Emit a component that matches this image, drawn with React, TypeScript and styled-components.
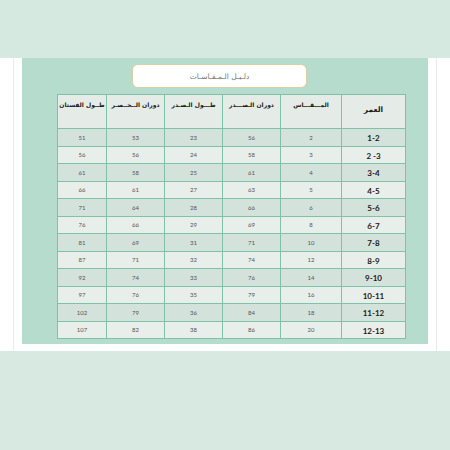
import React from 'react';
import styled, {createGlobalStyle} from 'styled-components';

const GlobalStyle = createGlobalStyle`
  html, body {
    margin: 0;
    padding: 0;
    background: #d8e9e2;
  }
  body {
    font-family: "DejaVu Sans", sans-serif;
  }
`;

interface SizeRow {
  age: string;
  size: number;
  chest: number;
  chestLength: number;
  waist: number;
  dressLength: number;
}

const rows: SizeRow[] = [
  {age: '1-2', size: 2, chest: 56, chestLength: 23, waist: 53, dressLength: 51},
  {age: '2 -3', size: 3, chest: 58, chestLength: 24, waist: 56, dressLength: 56},
  {age: '3-4', size: 4, chest: 61, chestLength: 25, waist: 58, dressLength: 61},
  {age: '4-5', size: 5, chest: 63, chestLength: 27, waist: 61, dressLength: 66},
  {age: '5-6', size: 6, chest: 66, chestLength: 28, waist: 64, dressLength: 71},
  {age: '6-7', size: 8, chest: 69, chestLength: 29, waist: 66, dressLength: 76},
  {age: '7-8', size: 10, chest: 71, chestLength: 31, waist: 69, dressLength: 81},
  {age: '8-9', size: 12, chest: 74, chestLength: 32, waist: 71, dressLength: 87},
  {age: '9-10', size: 14, chest: 76, chestLength: 33, waist: 74, dressLength: 92},
  {age: '10-11', size: 16, chest: 79, chestLength: 35, waist: 76, dressLength: 97},
  {age: '11-12', size: 18, chest: 84, chestLength: 36, waist: 79, dressLength: 102},
  {age: '12-13', size: 20, chest: 86, chestLength: 38, waist: 82, dressLength: 107},
];

const columns = [
  {title: 'المـــقـــاس', width: 61},
  {title: 'دوران الـصـــدر', width: 58},
  {title: 'طـــول الـصـدر', width: 58},
  {title: 'دوران الــخــصـر', width: 58},
  {title: 'طــول الفستان', width: 49},
];

export default function App() {
  return (
    <Page>
      <GlobalStyle />
      <TopBand />
      <Sheet>
        <Frame>
          <Panel>
            <TitleBox>دلـيـل الـمـقـاسـات</TitleBox>
            <Table>
              <colgroup>
                <col style={{width: 64}} />
                {columns.map((c) => (
                  <col key={c.title} style={{width: c.width}} />
                ))}
              </colgroup>
              <thead>
                <HeadRow>
                  <HeadCell $main>العمر</HeadCell>
                  {columns.map((c) => (
                    <HeadCell key={c.title}>{c.title}</HeadCell>
                  ))}
                </HeadRow>
              </thead>
              <tbody>
                {rows.map((r, i) => (
                  <Row key={r.age} $odd={i % 2 === 0}>
                    <AgeCell>{r.age}</AgeCell>
                    <Cell>{r.size}</Cell>
                    <Cell>{r.chest}</Cell>
                    <Cell>{r.chestLength}</Cell>
                    <Cell>{r.waist}</Cell>
                    <Cell>{r.dressLength}</Cell>
                  </Row>
                ))}
              </tbody>
            </Table>
          </Panel>
        </Frame>
      </Sheet>
    </Page>
  );
}

const Page = styled.div`
  width: 450px;
  height: 450px;
  background: #d8e9e2;
  display: flex;
  flex-direction: column;
`;

const TopBand = styled.div`
  height: 58px;
  background: #d6e9e1;
`;

const Sheet = styled.div`
  background: #ffffff;
  padding: 0 13px;
`;

const Frame = styled.div`
  border-left: 1px solid #e8ecea;
  border-right: 1px solid #e8ecea;
  padding: 0 8px 7px 8px;
`;

const Panel = styled.div`
  background: #b5dccd;
  padding: 6px 23px 5px 35px;
  display: flex;
  flex-direction: column;
`;

const TitleBox = styled.div`
  width: 173px;
  height: 22px;
  margin-left: 75px;
  margin-bottom: 6px;
  background: #ffffff;
  border: 1px solid #d8cfa4;
  border-radius: 6px;
  display: flex;
  align-items: center;
  justify-content: center;
  direction: rtl;
  color: #7a7a7a;
  font-size: 7.5px;
`;

const Table = styled.table`
  direction: rtl;
  width: 348px;
  table-layout: fixed;
  border-collapse: collapse;
  border-bottom: 1px solid #7cbfa6;
`;

const HeadRow = styled.tr`
  height: 34px;
`;

const HeadCell = styled.th<{$main?: boolean}>`
  box-sizing: border-box;
  height: 34px;
  padding: ${(p) => (p.$main ? '0 0 4px 0' : '6px 0 0 0')};
  vertical-align: ${(p) => (p.$main ? 'middle' : 'top')};
  background: #e5ebe7;
  border: 1px solid #80c1a9;
  color: #1a1a1a;
  font-size: ${(p) => (p.$main ? '7.5px' : '6px')};
  font-weight: bold;
  white-space: nowrap;
  overflow: hidden;
`;

const Row = styled.tr<{$odd: boolean}>`
  height: 17.5px;
  background: ${(p) => (p.$odd ? '#d4e2dc' : '#e8eeea')};
`;

const Cell = styled.td`
  padding: 0;
  border: 1px solid #80c1a9;
  text-align: center;
  direction: ltr;
  font-family: Lato, "DejaVu Sans", sans-serif;
  font-size: 6px;
  color: #555;
`;

const AgeCell = styled(Cell)`
  font-size: 8px;
  font-weight: bold;
  color: #1a1a1a;
  padding-top: 2px;
`;
